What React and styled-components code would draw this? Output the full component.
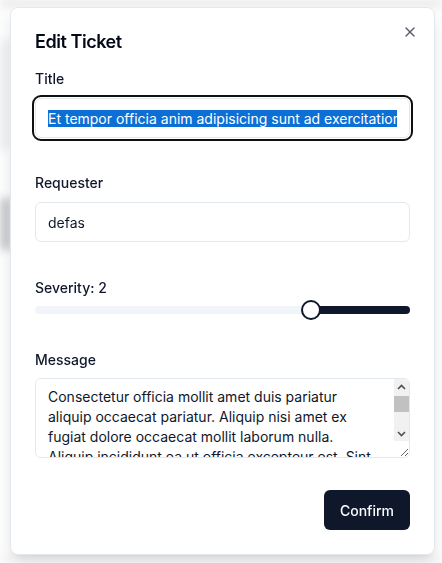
import React, { useEffect, useRef, useState } from 'react';
import styled, { createGlobalStyle } from 'styled-components';
import { X } from 'lucide-react';

const GlobalStyle = createGlobalStyle`
  * { box-sizing: border-box; }
  html, body {
    margin: 0;
    padding: 0;
    background: #ffffff;
    font-family: Inter, 'Noto Sans', 'Liberation Sans', sans-serif;
    color: #0f172a;
  }
`;

// the blurred page behind the dialog
const Backdrop = styled.div`
  height: 563px;
  overflow: hidden;
  filter: blur(4px);
  background:
    linear-gradient(#c4c6ca, #c4c6ca) 0 198px / 12px 52px no-repeat,
    linear-gradient(#ececee, #ececee) 0 40px / 10px 110px no-repeat,
    linear-gradient(#e4e4e6, #e4e4e6) 0 0 / 100% 6px no-repeat,
    linear-gradient(#f1f1f2, #f1f1f2) 0 556px / 100% 8px no-repeat,
    #fbfbfb;
`;

const Overlay = styled.div`
  position: fixed;
  inset: 0;
  padding: 7px 0 0 10px;
`;

const Dialog = styled.div`
  position: relative;
  width: 425px;
  padding: 24px;
  background: #ffffff;
  border: 1px solid #e2e8f0;
  border-radius: 8px;
  box-shadow: 0 10px 15px -3px rgba(0, 0, 0, 0.1), 0 4px 6px -4px rgba(0, 0, 0, 0.1);
`;

const CloseButton = styled.button`
  position: absolute;
  top: 16px;
  right: 16px;
  display: flex;
  padding: 0;
  border: none;
  background: none;
  color: #0f172a;
  opacity: 0.7;
  cursor: pointer;
`;

const Title = styled.h2`
  margin: 0 0 21px;
  padding-top: 1px;
  font-size: 18px;
  line-height: 18px;
  font-weight: 600;
  letter-spacing: -0.025em;
  color: #020817;
`;

const Form = styled.form`
  display: flex;
  flex-direction: column;
`;

const Field = styled.div`
  display: flex;
  flex-direction: column;
  gap: ${p => p.$gap}px;
  margin-bottom: ${p => p.$after}px;
`;

const Label = styled.label`
  font-size: 14px;
  line-height: 14px;
  font-weight: 500;
  color: #0f172a;
`;

const TextInput = styled.input`
  height: 40px;
  width: 100%;
  padding: 0 12px;
  border: 1px solid #e2e8f0;
  border-radius: 6px;
  background: #ffffff;
  font-family: inherit;
  font-size: 14px;
  color: #0f172a;
  outline: ${p => (p.$ring ? '2px solid #101010' : 'none')};
  outline-offset: 1px;

  &::selection {
    background: #0b6fd6;
    color: #ffffff;
  }
`;

const SliderRoot = styled.div`
  position: relative;
  display: flex;
  align-items: center;
  height: 20px;
`;

const Track = styled.div`
  position: relative;
  flex: 1;
  height: 8px;
  border-radius: 999px;
  background: #f1f5f9;
  overflow: hidden;
`;

const Range = styled.div`
  position: absolute;
  top: 0;
  bottom: 0;
  right: 0;
  background: #0f172a;
`;

const Thumb = styled.span`
  position: absolute;
  top: 0;
  width: 20px;
  height: 20px;
  border-radius: 50%;
  border: 2px solid #0f172a;
  background: #ffffff;
  transform: translateX(-50%);
`;

const AreaBox = styled.div`
  position: relative;
`;

const TextArea = styled.textarea`
  display: block;
  width: 100%;
  height: 80px;
  padding: 8px 27px 8px 12px;
  border: 1px solid #e2e8f0;
  border-radius: 6px;
  font-family: inherit;
  font-size: 14px;
  line-height: 20px;
  color: #0f172a;
  outline: none;
  scrollbar-width: none;
`;

// classic scrollbar drawn over the textarea's right edge
const ScrollBar = styled.div`
  position: absolute;
  top: 1px;
  right: 1px;
  width: 15px;
  height: 62px;
  display: flex;
  flex-direction: column;
  background: #f1f1f1;
  border-top-right-radius: 5px;
  pointer-events: none;
`;

const ScrollButton = styled.div`
  height: 15px;
  display: flex;
  align-items: center;
  justify-content: center;
  color: #505050;
`;

const ScrollTrack = styled.div`
  flex: 1;
  padding-top: 2px;
`;

const ScrollThumb = styled.div`
  height: 16px;
  background: #c1c1c1;
`;

const Chevron = ({ up }) => (
  <svg width="9" height="6" viewBox="0 0 9 6" fill="none">
    <path
      d={up ? 'M1 5 L4.5 1.5 L8 5' : 'M1 1 L4.5 4.5 L8 1'}
      stroke="currentColor"
      strokeWidth="1.6"
    />
  </svg>
);

const Footer = styled.div`
  display: flex;
  justify-content: flex-end;
`;

const Button = styled.button`
  height: 40px;
  padding: 0 16px;
  border: none;
  border-radius: 6px;
  background: #0f172a;
  color: #f8fafc;
  font-family: inherit;
  font-size: 14px;
  font-weight: 500;
  cursor: pointer;
`;

// inverted slider: the filled part runs from the thumb to the right end
const Severity = ({ value, min, max }) => {
  const pos = 100 - ((value - min) / (max - min)) * 100;
  const offset = 10 - (pos / 50) * 10;
  return (
    <SliderRoot>
      <Track>
        <Range style={{ left: `${pos}%` }} />
      </Track>
      <Thumb style={{ left: `calc(${pos}% + ${offset}px)` }} />
    </SliderRoot>
  );
};

const message =
  'Consectetur officia mollit amet duis pariatur aliquip occaecat pariatur. Aliquip nisi amet ex fugiat dolore occaecat mollit laborum nulla. Aliquip incididunt ea ut officia excepteur est. Sint ullamco nisi do ex aute anim cupidatat.';

const App = () => {
  const titleRef = useRef(null);
  const [title, setTitle] = useState('Et tempor officia anim adipisicing sunt ad exercitation ullamco');
  const [requester, setRequester] = useState('defas');
  const [body, setBody] = useState(message);

  useEffect(() => {
    const el = titleRef.current;
    if (el) {
      el.focus();
      el.setSelectionRange(0, el.value.length);
      el.scrollLeft = 0;
    }
  }, []);

  return (
    <>
      <GlobalStyle />
      <Backdrop />
      <Overlay>
        <Dialog>
          <CloseButton type="button" aria-label="Close">
            <X size={16} strokeWidth={2} />
          </CloseButton>
          <Title>Edit Ticket</Title>
          <Form onSubmit={e => e.preventDefault()}>
            <Field $gap={12} $after={38}>
              <Label htmlFor="title">Title</Label>
              <TextInput
                id="title"
                ref={titleRef}
                $ring
                value={title}
                onChange={e => setTitle(e.target.value)}
              />
            </Field>
            <Field $gap={12} $after={39}>
              <Label htmlFor="requester">Requester</Label>
              <TextInput
                id="requester"
                value={requester}
                onChange={e => setRequester(e.target.value)}
              />
            </Field>
            <Field $gap={5} $after={33}>
              <Label>Severity: 2</Label>
              <Severity value={2} min={1} max={5} />
            </Field>
            <Field $gap={11} $after={32}>
              <Label htmlFor="message">Message</Label>
              <AreaBox>
                <TextArea id="message" value={body} onChange={e => setBody(e.target.value)} />
                <ScrollBar>
                  <ScrollButton><Chevron up /></ScrollButton>
                  <ScrollTrack><ScrollThumb /></ScrollTrack>
                  <ScrollButton><Chevron /></ScrollButton>
                </ScrollBar>
              </AreaBox>
            </Field>
            <Footer>
              <Button type="submit">Confirm</Button>
            </Footer>
          </Form>
        </Dialog>
      </Overlay>
    </>
  );
};

export default App;
